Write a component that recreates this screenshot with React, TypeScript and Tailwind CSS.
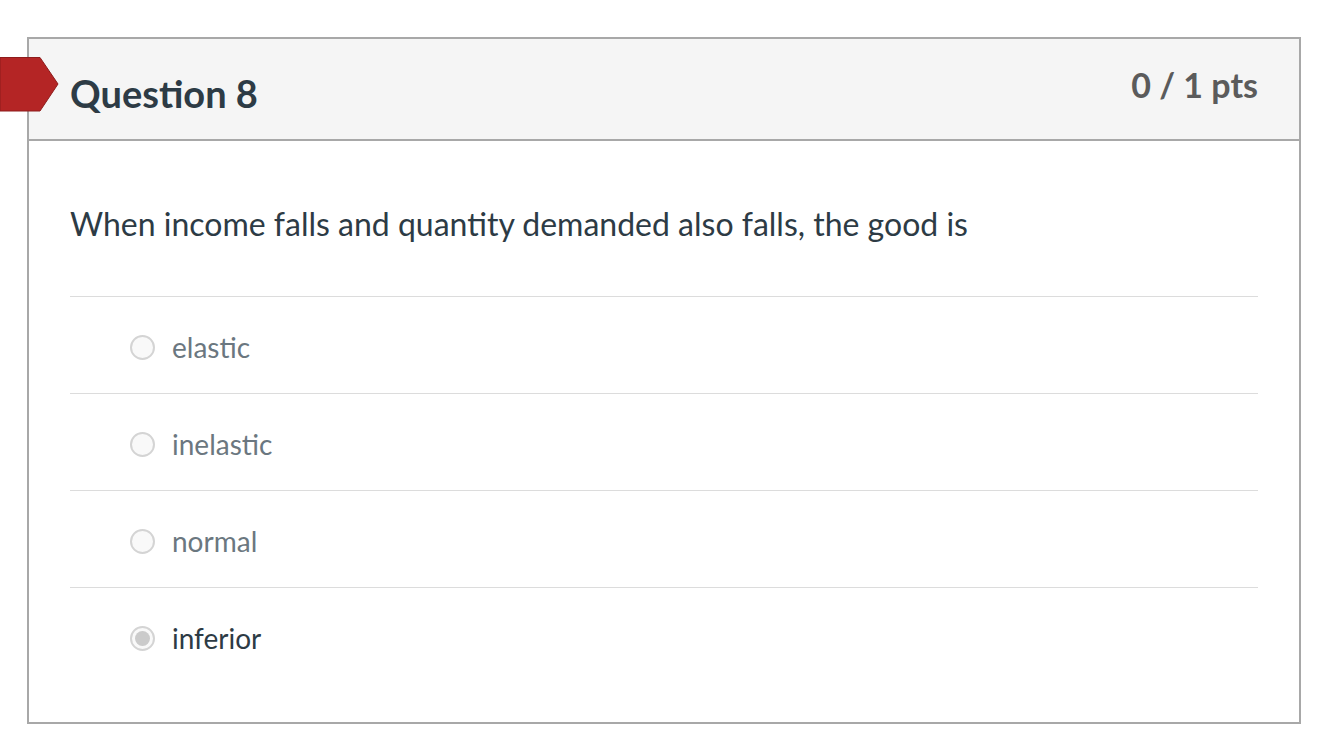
const options = [
  { label: "elastic", checked: false },
  { label: "inelastic", checked: false },
  { label: "normal", checked: false },
  { label: "inferior", checked: true },
]

function Radio({ checked }: { checked: boolean }) {
  return (
    <div className="w-[25px] h-[25px] rounded-full border-2 border-[#d4d4d4] bg-[#f9f9f9] flex items-center justify-center shrink-0">
      {checked && <div className="w-[15px] h-[15px] rounded-full bg-[#cbcbcb]" />}
    </div>
  )
}

export default function App() {
  return (
    <div className="bg-white w-[1328px] h-[750px] pt-[37px] pl-[27px] font-['Lato','Liberation_Sans',sans-serif] relative">
      {/* red marker flag */}
      <div className="absolute left-0 top-[57px]">
        <svg width="60" height="55" viewBox="0 0 60 55">
          <path d="M0 0.5 H40 L58 27 L40 54 H0 Z" fill="#b42525" stroke="#8e1c1c" strokeWidth="1" />
        </svg>
      </div>
      <div className="w-[1274px] h-[687px] border-2 border-[#a8a8a8] flex flex-col">
        <div className="h-[102px] bg-[#f5f5f5] border-b-2 border-[#a8a8a8] flex justify-between pl-[41px] pr-[41px]">
          <h2 className="pt-[32px] text-[38px] leading-[1.2] font-bold text-[#2d3b45]">Question 8</h2>
          <div className="pt-[26px] text-[34px] leading-[1.2] font-bold text-[#5b5b5b]">0 / 1 pts</div>
        </div>
        <div className="px-[41px]">
          <p className="mt-[64px] text-[32px] leading-[1.2] text-[#2d3b45]">
            When income falls and quantity demanded also falls, the good is
          </p>
          <div className="mt-[53px]">
            {options.map((o) => (
              <div key={o.label} className="h-[97px] border-t border-[#dcdcdc] flex items-center pl-[60px] gap-[17px] pt-[4px]">
                <Radio checked={o.checked} />
                <span className={`text-[28px] leading-[1.2] ${o.checked ? "text-[#2d3b45]" : "text-[#6b7780]"}`}>{o.label}</span>
              </div>
            ))}
          </div>
        </div>
      </div>
    </div>
  )
}
